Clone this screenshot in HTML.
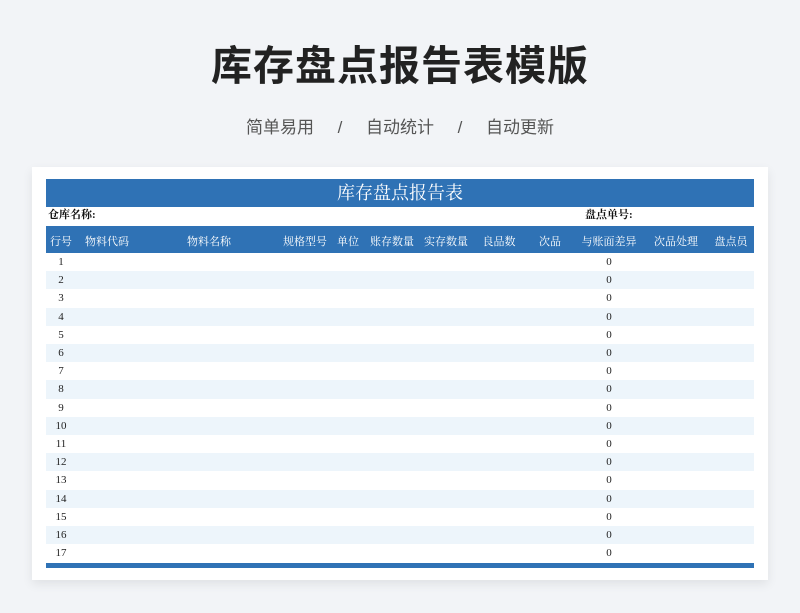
<!DOCTYPE html>
<html><head><meta charset="utf-8"><style>
body{margin:0;width:800px;height:613px;background:#f2f4f7;font-family:"Liberation Sans","Noto Sans CJK SC",sans-serif;position:relative;overflow:hidden}
.t{position:absolute;top:32px;left:0;width:800px;text-align:center;font-size:41px;font-weight:bold;color:#222;letter-spacing:1px}
.s{position:absolute;top:113px;left:0;width:800px;text-align:center;font-size:17px;color:#555;word-spacing:0}
.card{position:absolute;left:32px;top:167px;width:736px;height:413px;background:#fff;box-shadow:0 4px 10px rgba(0,0,0,.08)}
.tb{position:absolute;left:46px;width:708px;font-family:"Liberation Serif","Noto Serif CJK SC",serif}
.bar{top:179px;height:28px;background:#2f72b5;color:#fff;text-align:center;font-size:18px;line-height:28px}
.info{top:207px;height:19px;font-size:11px;font-weight:bold;line-height:17px;color:#111}
.hd{top:226px;height:27px;background:#2f72b5;color:#fff;font-size:11px}
.hd span,.r span{position:absolute;transform:translateX(-50%);white-space:nowrap}
.hd span{top:7px}
.r{height:18.2px;font-size:11px;color:#222}
.r span{top:3px}
.alt{background:#edf5fb}
.bot{top:563px;height:5px;background:#2f72b5}
</style></head><body>
<div class="t">库存盘点报告表模版</div>
<div class="s">简单易用&nbsp;&nbsp;&nbsp;&nbsp;&nbsp;/&nbsp;&nbsp;&nbsp;&nbsp;&nbsp;自动统计&nbsp;&nbsp;&nbsp;&nbsp;&nbsp;/&nbsp;&nbsp;&nbsp;&nbsp;&nbsp;自动更新</div>
<div class="card"></div>
<div class="tb bar">库存盘点报告表</div>
<div class="tb info"><span style="position:absolute;left:2px">仓库名称:</span><span style="position:absolute;left:539px">盘点单号:</span></div>
<div class="tb hd">
<span style="left:15px">行号</span><span style="left:61px">物料代码</span><span style="left:163px">物料名称</span><span style="left:259px">规格型号</span><span style="left:302px">单位</span><span style="left:346px">账存数量</span><span style="left:400px">实存数量</span><span style="left:453px">良品数</span><span style="left:504px">次品</span><span style="left:563px">与账面差异</span><span style="left:630px">次品处理</span><span style="left:685px">盘点员</span>
</div>
<div id="rows"></div>
<script>
var h='';for(var i=1;i<=17;i++){h+='<div class="tb r'+(i%2==0?' alt':'')+'" style="top:'+(253+(i-1)*18.2)+'px"><span style="left:15px">'+i+'</span><span style="left:563px">0</span></div>';}
document.getElementById('rows').innerHTML=h;
</script>
<div class="tb bot"></div>
</body></html>
